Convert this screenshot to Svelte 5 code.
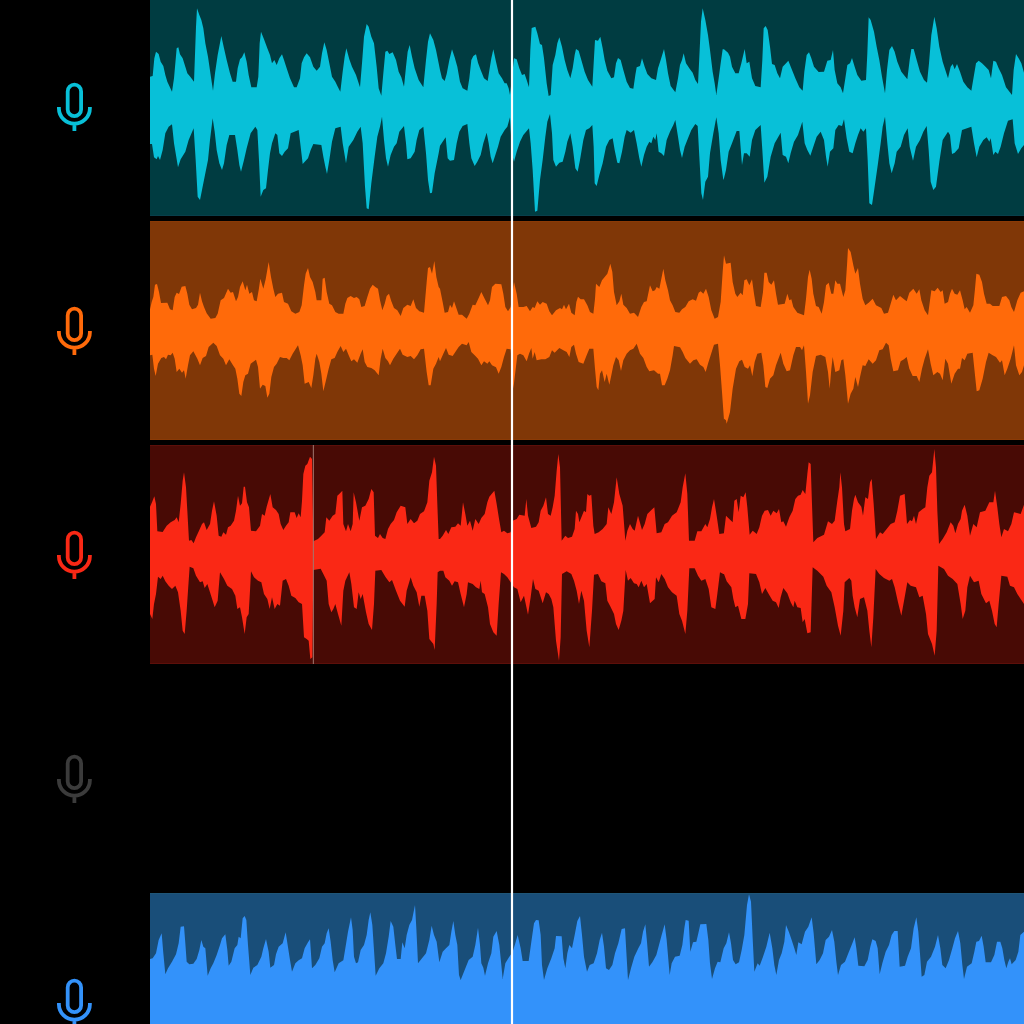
<script lang="ts">
	type Chunk = {
		start: number;
		top: string;
		bottom?: string;
	};

	type Track = {
		id: string;
		color: string;
		background?: string;
		edge?: string;
		offset: number;
		marker?: number;
		chunks: Chunk[];
	};

	// waveform units: 3 per pixel, x counted from the start of the lane
	const WIDTH = 2622;
	const HEIGHT = 657;

	const tracks: Track[] = [
		{
			id: 'vocals',
			color: '#08c0d8',
			background: '#003c41',
			edge: '#083f4b',
			offset: 9,
			chunks: [
				{
					start: 0,
					top: '0,230 8,228 13,175 18,155 26,162 32,185 40,198 46,225 52,245 58,258 66,275 72,235 80,145 85,142 90,163 98,175 106,200 112,220 122,232 132,245 138,80 141,25 148,45 154,60 160,85 166,130 174,170 182,225 189,272 195,220 203,165 214,108 222,145 230,180 240,220 248,245 258,245 263,205 270,178 276,172 283,157 290,185 296,225 304,262 320,262 325,230 329,130 333,95 342,118 352,145 360,165 366,190 373,180 380,195 388,175 396,163 402,180 410,205 420,235 432,262 440,262 450,235 455,190 462,172 470,160 480,172 490,200 500,212 510,200 516,160 523,127 530,150 538,190 546,230 556,245 564,262 571,275 578,215 584,170 589,145 598,178 606,200 618,225 630,262 636,190 642,110 650,72 656,80 664,110 672,130 680,200 686,265 694,287 700,220 706,155 712,152 718,162 728,157 738,180 746,215 754,232 762,260 768,200 773,155 779,135 786,170 794,205 806,240 820,262 828,180 834,125 840,100 850,120 858,150 866,190',
					bottom: '0,432 6,432 12,472 20,478 24,468 30,480 38,450 46,400 56,380 66,373 72,430 84,502 92,478 106,455 116,420 131,385 137,480 143,590 150,600 156,570 166,520 174,480 180,420 188,355 194,395 200,450 208,490 216,510 222,490 230,435 238,405 255,405 262,450 268,495 273,515 282,480 290,445 302,400 316,380 322,390 327,480 332,590 340,570 348,565 354,510 360,460 366,430 376,400 382,405 388,460 396,468 404,455 414,445 422,400 446,390 452,440 458,492 474,475 482,450 490,432 514,435 520,470 526,500 531,522 538,480 546,425 556,385 572,380 578,430 588,490 596,440 610,420 622,395 632,380 638,430 645,560 650,625 656,628 664,550 674,470 682,410 690,380 696,350 702,420 708,475 714,500 722,465 732,440 740,430 748,395 762,378 768,430 772,478 782,475 794,455 800,420 808,390 820,380 828,460 834,540 840,580 846,578 854,520 866,460'
				},
				{
					start: 870,
					top: '0,210 6,235 14,243 20,222 28,180 36,148 44,172 52,200 60,245 68,265 82,272 88,235 94,180 100,168 108,163 114,188 122,210 132,235 143,243 149,205 154,175 160,148 168,185 176,220 186,235 194,250 200,250 206,265 210,285 216,230 222,175 230,178 238,205 246,225 254,222 260,240 267,262 271,150 275,84 286,80 292,100 300,132 306,135 312,175 320,250 326,288 332,285 338,195 346,165 352,130 358,112 366,140 374,180 382,210 391,235 398,205 404,165 408,147 416,152 424,180 434,215 444,240 457,260 461,190 465,120 474,122 481,110 488,145 494,180 502,212 514,235 522,232 528,190 534,174 542,180 550,210 560,245 570,264 580,266 586,225 590,202 600,198 606,175 614,200 622,222 634,235 648,240 654,205 662,180 672,147 678,180 684,220 692,258 706,277 714,235 720,195 726,180 731,160 738,190 750,208 758,218 766,240 774,252 779,150 783,65 788,25 796,60 804,105 810,150 818,215 824,250 829,285 836,235 842,190 848,148',
					bottom: '0,437 8,425 17,412 23,475 30,482 42,480 50,430 58,395 68,378 82,372 88,430 94,475 104,498 112,485 122,465 130,430 140,398 146,430 152,470 158,490 166,465 174,440 182,410 194,390 202,380 210,352 216,460 222,485 230,455 240,425 250,405 267,385 272,430 278,510 285,635 292,632 300,540 308,480 316,410 322,365 330,342 336,400 340,480 348,500 358,488 368,485 376,455 382,425 391,400 398,440 406,505 413,515 420,480 430,420 438,390 448,385 457,375 461,440 464,550 470,558 478,525 488,490 498,440 508,420 518,415 524,450 532,488 538,490 546,455 554,410 560,390 572,398 582,390 590,430 598,475 604,500 612,465 620,440 628,425 634,430 640,410 646,420 650,400 656,455 664,460 672,468 680,420 690,395 700,375 706,360 714,410 720,450 726,474 734,440 744,415 754,390 766,372 773,378 778,470 784,580 789,600 796,545 804,530 810,460 820,400 829,352 836,400 842,480 850,540'
				},
				{
					start: 1722,
					top: '0,148 12,158 18,170 24,200 34,220 44,220 52,190 62,147 68,190 76,185 84,235 94,258 110,262 115,180 119,85 125,78 131,90 138,140 144,192 152,195 160,220 168,235 176,200 184,192 193,182 202,205 214,235 226,262 236,272 241,215 248,165 255,157 262,175 270,200 284,216 300,215 310,182 320,180 327,150 332,210 340,250 350,262 357,280 364,235 370,195 378,190 384,174 392,200 400,225 412,242 426,240 430,160 434,52 440,60 450,95 458,140 466,180 474,230 483,280 489,210 496,150 504,138 512,155 520,185 532,215 550,238 557,180 562,147 569,147 578,180 588,215 600,240 609,248 615,190 622,105 631,50 638,85 646,140 656,185 664,210 672,235 680,200 686,192 692,208 699,192 708,215 718,245 730,262 742,272 750,225 756,190 764,182 774,190 786,202 794,210 801,235 808,182 816,185 824,205 834,225 846,262 864,285 869,210 876,162 884,175 892,190 900,218',
					bottom: '0,535 6,510 14,455 24,430 38,393 46,393 54,495 60,460 68,460 77,470 84,420 94,390 110,375 115,450 121,548 130,530 140,470 152,430 170,398 176,465 186,470 193,490 200,460 210,425 222,405 235,365 242,430 250,450 259,467 268,440 278,410 290,395 300,420 306,470 311,500 318,455 328,445 334,390 344,375 354,378 360,358 368,415 376,455 386,460 394,430 402,405 410,385 418,395 426,385 431,480 436,610 444,615 452,560 462,490 470,430 476,380 483,350 490,430 496,490 503,520 512,490 518,455 530,440 540,405 551,385 557,440 567,482 576,440 588,420 598,395 608,378 614,450 620,545 628,570 636,560 646,485 656,420 672,395 678,405 684,462 692,458 704,445 714,390 742,380 750,430 758,472 766,440 778,420 788,412 796,425 800,415 808,465 814,455 822,462 830,440 840,400 852,362 866,358 872,430 882,462 892,445 900,435'
				}
			]
		},
		{
			id: 'guitar',
			color: '#ff6a0a',
			background: '#803707',
			edge: '#8a3a06',
			offset: 3,
			chunks: [
				{
					start: 0,
					top: '0,262 5,240 10,225 15,188 21,186 27,210 33,243 52,242 60,262 68,265 74,225 80,212 87,216 95,194 106,192 112,215 118,248 126,262 138,258 144,248 150,212 156,238 162,255 170,274 182,290 196,288 203,275 212,235 222,228 234,200 242,212 249,210 258,238 264,225 270,195 278,178 286,205 291,188 298,215 306,210 312,235 320,238 326,205 331,170 340,200 347,172 356,120 363,165 370,200 376,225 384,215 396,212 402,240 414,245 424,268 436,275 448,270 455,250 462,190 467,155 474,138 480,165 488,180 496,210 500,235 514,235 518,170 524,167 530,210 538,245 546,250 556,270 566,275 580,275 586,245 592,228 602,222 612,228 620,225 628,232 634,255 644,252 652,225 660,200 668,188 676,195 684,200 690,235 697,265 704,245 710,222 717,215 724,238 732,258 742,265 752,282 760,258 772,248 782,252 790,232 798,258 808,268 822,272 830,180 834,138 840,135 846,155 853,117 859,165 866,195',
					bottom: '0,400 7,398 12,440 17,462 24,425 34,408 42,405 48,412 54,398 62,400 68,392 74,410 80,450 88,440 96,452 102,445 107,470 114,430 120,400 130,388 142,410 150,430 158,408 168,402 176,375 190,362 200,372 210,400 220,410 228,430 238,412 248,428 256,440 262,470 268,515 274,522 280,480 286,460 294,455 302,425 318,413 324,435 330,500 338,488 346,492 352,527 358,515 364,465 372,435 380,425 390,405 400,408 410,408 418,415 428,395 444,370 452,400 458,430 464,485 476,480 484,498 490,460 496,410 500,395 508,420 514,455 520,508 528,475 536,440 544,412 554,408 562,390 572,372 580,390 588,380 596,400 604,418 612,412 622,422 632,395 638,382 644,420 652,435 664,438 674,445 686,460 692,410 698,380 706,408 714,418 720,430 730,410 740,395 750,380 758,398 772,405 782,402 792,412 802,400 812,382 822,380 830,450 836,490 842,490 850,440 858,425 866,405'
				},
				{
					start: 870,
					top: '0,200 8,240 14,272 24,270 30,248 36,258 42,238 48,255 56,278 66,278 80,290 88,275 98,248 106,250 116,228 124,210 134,230 144,250 150,235 156,195 166,185 184,187 190,215 196,255 204,268 212,255 222,180 230,215 236,255 250,255 260,252 270,268 278,255 284,258 292,238 300,248 308,240 320,245 328,268 336,280 348,265 360,258 366,262 372,248 378,262 387,245 394,272 404,280 409,240 414,224 422,232 432,232 442,250 450,270 460,275 465,230 468,185 478,195 486,175 494,165 502,155 511,125 517,150 522,210 530,250 538,238 544,215 550,248 560,258 570,275 582,272 594,285 604,255 612,240 620,238 630,190 638,208 645,205 650,195 658,200 664,170 670,140 676,175 684,205 690,235 698,250 706,270 718,272 726,262 736,255 746,238 758,232 768,236 776,212 782,208 790,215 798,200 806,225 814,265 824,290 834,285 842,240 848,150 852,100',
					bottom: '0,418 10,395 18,378 26,398 38,402 46,390 56,375 66,365 80,370 86,360 94,390 104,400 114,410 124,430 132,418 142,425 148,418 156,430 168,436 176,455 184,435 192,405 200,380 212,382 220,500 226,450 232,400 240,395 250,400 260,418 267,395 274,378 278,410 284,390 290,415 304,412 316,412 328,405 336,385 344,392 358,378 370,385 380,390 388,405 394,375 402,368 408,395 416,420 430,425 440,400 448,380 460,380 465,440 470,495 475,505 480,455 486,445 494,480 500,455 508,488 514,460 520,430 528,405 536,415 543,447 550,415 560,395 570,385 580,380 590,365 600,395 610,408 620,435 628,448 642,445 654,455 660,455 666,490 674,490 682,470 690,445 698,400 702,372 720,376 728,390 736,408 750,425 760,415 770,412 780,428 790,435 797,450 804,425 812,400 822,368 834,365 840,430 846,510 852,595'
				},
				{
					start: 1722,
					top: '0,100 6,125 20,122 26,180 34,215 40,225 50,212 56,220 61,175 68,172 76,190 84,172 90,215 96,252 110,255 117,210 121,152 128,152 134,180 142,188 150,175 156,215 162,248 182,245 190,215 196,235 202,232 208,255 220,272 240,280 246,230 252,165 257,143 263,170 268,215 276,252 284,255 293,275 300,240 306,190 314,182 322,215 328,215 334,175 340,185 348,185 358,225 364,205 369,130 372,78 380,90 388,130 394,155 402,138 408,185 416,230 424,250 434,242 446,230 456,250 472,258 480,275 492,272 500,245 508,218 516,235 528,222 540,232 548,238 556,212 568,200 578,215 586,202 592,235 602,265 612,280 618,235 622,205 632,208 641,197 650,210 656,205 662,245 672,240 678,215 684,200 692,215 700,218 708,205 716,235 722,262 728,255 738,272 748,250 753,200 757,155 766,158 774,180 780,215 788,245 798,245 806,252 826,252 834,225 846,222 856,235 862,255 870,270 880,235 890,212 900,208',
					bottom: '0,590 6,595 8,605 12,592 18,570 26,500 36,440 46,418 54,413 62,435 72,440 78,430 85,463 92,420 100,395 112,392 118,430 124,495 130,498 138,470 148,460 156,430 170,392 178,425 188,448 198,445 208,400 216,375 228,375 234,385 240,370 246,450 252,545 258,520 266,450 276,402 290,398 304,405 312,450 317,500 322,440 326,405 334,450 346,445 352,415 358,412 364,460 372,545 380,515 388,500 394,465 402,495 408,465 416,430 424,432 434,412 446,425 456,415 466,385 476,382 486,362 494,370 500,410 508,448 522,445 530,418 540,412 548,405 556,440 566,462 578,462 586,480 594,440 602,410 612,382 620,425 628,460 640,450 648,455 656,475 664,410 672,425 682,485 692,455 702,440 708,440 714,408 722,415 730,395 746,392 752,450 758,508 766,505 776,470 786,420 794,392 806,400 816,405 828,422 834,415 842,460 850,440 860,410 870,370 876,430 886,460 894,450 900,430'
				}
			]
		},
		{
			id: 'drums',
			color: '#fa2815',
			background: '#480a05',
			edge: '#5c0f0a',
			offset: -3,
			marker: 490,
			chunks: [
				{
					start: 0,
					top: '0,188 6,175 13,157 18,180 22,262 38,264 50,245 62,235 74,228 80,220 86,235 92,180 98,110 102,85 108,130 112,200 117,290 124,288 131,298 138,280 148,258 156,240 162,235 170,258 180,240 186,200 192,172 200,215 206,275 214,278 220,265 228,272 234,250 242,245 252,230 258,200 264,155 270,185 276,178 281,128 285,128 291,175 297,190 303,260 318,262 330,245 336,210 344,215 350,188 361,150 368,190 378,198 386,210 392,240 400,258 408,245 416,235 421,205 434,205 440,222 446,208 452,220 456,170 460,90 466,65 472,60 480,38 486,45 490,292 504,285 514,275 524,265 529,220 538,230 548,215 556,210 562,155 570,148 577,140 580,240 588,262 594,240 602,262 608,240 611,145 618,175 628,230 636,190 646,185 656,165 664,135 671,145 675,275 684,282 690,270 698,282 706,285 714,255 722,240 732,228 740,205 752,185 766,190 772,240 782,225 792,238 802,230 810,210 822,202 832,175 838,110 846,85 852,38 858,65 862,180 866,285',
					bottom: '0,510 7,525 12,480 18,450 24,398 32,405 38,395 46,412 56,425 66,435 76,425 84,445 92,500 98,560 104,570 110,500 114,440 119,368 130,373 138,395 150,415 158,412 164,432 172,420 180,445 188,470 194,490 203,470 210,385 222,405 232,425 246,435 256,455 262,495 270,490 276,520 284,570 290,520 296,510 300,440 303,382 312,400 324,410 334,415 342,450 352,465 359,495 366,460 374,495 382,480 390,485 398,410 408,405 416,425 424,455 436,462 446,475 456,480 462,580 470,585 476,590 481,645 487,640 490,378 512,374 520,390 530,410 536,480 544,505 550,495 556,480 564,510 574,545 580,440 586,410 598,385 604,420 612,490 620,495 626,445 632,465 638,450 648,505 656,540 666,558 672,480 676,380 694,378 706,398 718,415 726,408 738,440 750,470 764,488 770,440 782,400 790,425 800,445 808,488 814,455 824,455 832,500 838,585 850,600 854,618 860,480 863,385'
				},
				{
					start: 870,
					top: '0,285 8,275 18,258 25,270 34,250 46,248 54,238 62,245 69,175 76,210 82,245 90,230 98,260 106,225 116,240 124,222 134,210 142,175 148,158 163,140 170,180 178,230 184,265 192,260 202,268 212,265 218,230 230,225 238,212 254,215 259,165 264,215 274,252 288,248 296,235 302,200 310,185 318,160 324,210 332,215 338,190 344,155 350,80 355,30 360,70 365,290 376,275 384,282 396,278 404,255 408,200 414,210 418,235 426,215 432,200 438,205 442,150 448,155 454,152 460,245 464,270 476,265 488,255 500,240 505,190 514,210 522,175 530,100 538,150 548,185 556,290 562,260 570,240 578,255 584,260 594,215 606,258 614,240 622,210 634,198 643,190 650,268 664,265 674,240 684,235 696,215 710,205 722,175 728,130 736,88 742,150 747,290 764,290 772,262 784,262 796,240 802,250 810,225 816,190 822,165 830,215 838,270 852,268',
					bottom: '0,380 10,380 16,400 28,410 36,425 44,412 54,415 62,450 72,490 80,450 84,415 98,420 108,430 118,435 122,410 126,445 134,450 144,490 150,540 160,565 170,575 176,480 183,385 192,390 202,400 212,415 222,430 232,435 242,475 252,455 264,512 272,460 279,405 286,435 296,440 308,478 318,445 326,450 334,465 340,490 348,590 357,650 362,580 366,390 380,382 394,390 402,410 410,440 417,480 424,440 432,470 440,560 448,610 456,500 462,392 474,390 484,412 496,418 502,470 510,485 522,510 528,540 536,558 544,530 550,500 557,378 564,410 572,402 582,418 590,420 596,430 604,410 612,430 620,420 630,478 644,465 648,400 656,415 664,390 674,405 684,430 696,445 710,455 718,510 726,530 736,570 742,500 748,373 764,373 774,395 784,410 796,405 806,435 814,490 826,495 832,450 840,385 850,390'
				},
				{
					start: 1722,
					top: '0,265 6,215 16,225 26,235 31,170 38,165 44,205 50,155 58,160 65,145 70,190 77,272 86,260 92,265 98,270 106,250 114,215 122,200 132,198 140,215 148,200 158,208 165,195 172,235 178,232 186,248 196,220 206,200 214,165 222,155 230,152 236,138 244,150 250,90 254,55 260,60 264,180 268,295 280,282 300,272 312,232 324,240 332,230 340,170 346,130 349,85 354,130 360,240 364,262 378,255 384,200 390,165 394,152 402,175 412,188 417,215 424,160 432,165 438,115 443,105 449,180 456,285 468,265 476,270 488,255 500,240 512,235 520,200 528,155 542,150 549,240 558,228 564,232 570,215 576,240 584,205 596,195 604,190 610,130 616,95 624,85 631,15 636,70 640,200 645,300 656,285 668,265 680,235 688,245 694,268 702,240 710,225 714,200 722,182 730,215 738,275 748,240 758,250 768,205 784,200 796,175 808,175 813,140 820,190 826,240 832,280 840,255 852,262 862,240 870,205 882,208 890,210 900,182',
					bottom: '0,390 8,412 22,430 28,465 34,490 42,485 52,525 64,525 72,480 76,388 96,390 106,415 114,450 124,432 134,450 146,470 156,475 164,492 170,460 178,432 190,448 200,475 208,490 212,470 220,490 230,492 236,535 242,525 250,568 260,565 266,370 280,380 298,398 308,425 322,445 332,490 342,545 350,575 358,500 362,415 376,402 382,410 386,455 392,490 400,520 408,465 420,460 430,500 436,560 442,610 448,520 455,375 466,390 480,402 496,410 504,405 512,430 522,475 532,515 542,460 550,415 560,425 576,430 586,460 596,455 606,510 612,570 624,600 632,635 638,560 643,365 660,375 672,395 686,405 700,420 710,480 716,525 724,500 730,430 738,395 750,415 764,410 772,450 786,478 796,470 804,500 812,540 818,550 824,480 832,395 850,398 858,425 870,430 880,450 890,465 900,480'
				}
			]
		},
		{
			id: 'empty',
			color: '#3b3b3b',
			offset: 0,
			chunks: []
		},
		{
			id: 'bass',
			color: '#3392fa',
			background: '#194e79',
			edge: '#1f5678',
			offset: -24,
			chunks: [
				{
					start: 0,
					top: '0,222 8,220 18,205 26,165 35,145 40,205 46,268 54,250 66,230 78,208 86,175 92,125 102,124 106,175 110,230 118,238 130,236 140,222 148,195 154,165 160,185 166,190 173,272 182,250 190,235 200,210 210,180 216,160 226,148 232,195 236,242 244,230 254,190 262,180 266,155 272,160 278,100 284,93 289,105 294,180 301,270 310,248 322,240 334,215 340,190 348,162 356,200 361,248 372,240 378,208 386,185 398,175 407,142 413,180 420,225 426,260 436,235 446,226 456,220 464,190 474,172 480,163 486,250 496,240 508,220 516,185 524,175 530,145 536,130 542,170 548,225 554,262 566,235 580,226 586,190 594,140 603,97 608,135 612,215 618,235 624,232 632,195 642,180 650,150 656,105 661,82 667,120 672,195 677,272 688,250 700,235 708,205 716,155 722,108 730,125 736,180 741,222 752,222 757,172 764,190 770,150 778,120 786,105 795,60 799,130 804,235 816,220 828,205 838,165 845,122 852,150 860,170 868,232 878,200 888,190 898,180 904,140 910,108 916,150 922,180 927,270 932,285 944,255 956,225 968,215 976,180 984,128 990,180 994,235 1000,248 1005,272 1014,235 1024,205 1030,155 1040,138 1048,180 1054,240 1058,282 1066,235 1076,218 1088,200 1096,175 1103,150 1112,190 1118,228 1136,228 1144,170 1152,115 1158,105 1166,106 1172,150 1176,240 1182,285 1192,250 1204,220 1214,190 1218,153 1235,154 1240,220 1246,250 1252,205 1258,180 1266,190 1274,150 1282,108 1290,93 1296,150 1302,215'
				},
				{
					start: 1311,
					top: '0,260 8,240 20,235 30,205 38,165 45,143 51,185 57,250 66,255 76,240 84,205 94,175 104,132 114,130 118,200 123,285 132,250 142,215 154,190 162,175 168,140 175,118 180,170 186,245 196,232 208,210 216,180 224,150 233,118 239,165 248,270 254,235 264,215 278,212 286,180 292,130 296,105 305,107 310,200 318,172 328,170 334,145 340,118 358,117 364,165 369,235 375,282 384,250 392,230 400,232 410,190 418,175 426,142 432,175 438,225 446,238 456,232 464,195 472,150 480,60 486,28 492,50 497,160 502,260 512,235 518,242 528,215 538,185 548,143 556,190 562,240 568,270 576,225 584,205 592,170 597,120 606,142 614,165 622,190 628,210 634,172 644,178 654,140 664,125 674,97 680,145 688,238 698,225 708,205 716,165 726,155 735,135 742,170 748,230 753,270 762,240 774,230 784,205 794,180 803,157 808,190 814,242 832,244 842,225 850,185 856,163 866,168 872,190 878,268 886,235 896,200 906,180 914,150 922,138 932,138 938,245 954,242 962,215 972,190 980,130 988,97 994,140 1000,220 1004,275 1012,270 1020,230 1032,215 1044,185 1053,150 1060,190 1066,240 1076,250 1086,225 1096,190 1104,160 1113,138 1120,175 1126,240 1131,282 1140,245 1154,235 1162,200 1168,170 1176,168 1184,152 1190,185 1196,232 1212,232 1222,210 1230,170 1240,170 1246,190 1252,225 1258,250 1264,230 1269,220 1274,238 1286,225 1294,200 1300,150 1311,140'
				}
			]
		}
	];

	function toPoints(track: Track, side: 'top' | 'bottom') {
		return track.chunks.flatMap((chunk) =>
			(chunk[side] ?? '')
				.split(' ')
				.filter(Boolean)
				.map((pair) => {
					const [x, y] = pair.split(',').map(Number);
					return [x + chunk.start, y + track.offset];
				})
		);
	}

	function wavePath(track: Track) {
		const top = toPoints(track, 'top');
		let bottom = toPoints(track, 'bottom');
		if (!bottom.length) {
			bottom = [
				[0, HEIGHT],
				[WIDTH, HEIGHT]
			];
		}
		return 'M' + [...top, ...bottom.reverse()].map((p) => p.join(' ')).join('L') + 'Z';
	}
</script>

<main class="editor">
	<div class="tracks">
		{#each tracks as track (track.id)}
			<section class="track">
				<div class="head">
					<svg class="mic" viewBox="0 0 36 49" style:color={track.color}>
						<rect x="10.7" y="2.7" width="13.4" height="31.4" rx="6.7" />
						<path d="M1.9 25v1.2a15.5 15.5 0 0 0 31 0V25M17.4 41.7v7.3" />
					</svg>
				</div>
				<div class="lane">
					{#if track.chunks.length}
						<svg class="wave" viewBox="0 0 {WIDTH} {HEIGHT}" preserveAspectRatio="none">
							<rect width={WIDTH} height={HEIGHT} fill={track.background} />
							<path d={wavePath(track)} fill={track.color} />
							<path d="M0 1.5H{WIDTH}M0 {HEIGHT - 1.5}H{WIDTH}" stroke={track.edge} stroke-width="3" />
							{#if track.marker}
								<path d="M{track.marker} 0V{HEIGHT}" stroke="#a07a72" stroke-width="3" />
							{/if}
						</svg>
					{/if}
				</div>
			</section>
		{/each}
	</div>
	<div class="playhead"></div>
</main>

<style>
	:global(body) {
		margin: 0;
		background: #000;
	}

	.editor {
		position: relative;
		width: 1024px;
		height: 1024px;
		overflow: hidden;
		background: #000;
	}

	.tracks {
		display: grid;
		grid-auto-rows: 219px;
		row-gap: 5px;
		margin-top: -3px;
	}

	.track {
		display: grid;
		grid-template-columns: 150px 1fr;
	}

	.head {
		display: flex;
		align-items: center;
		justify-content: center;
	}

	.mic {
		width: 36px;
		height: 49px;
		fill: none;
		stroke: currentColor;
		stroke-width: 3.8;
	}

	.wave {
		display: block;
		width: 100%;
		height: 219px;
	}

	.playhead {
		position: absolute;
		top: 0;
		bottom: 0;
		left: 511px;
		width: 2px;
		background: #fff;
		box-shadow: 0 0 1px rgba(255, 255, 255, 0.9);
	}
</style>
